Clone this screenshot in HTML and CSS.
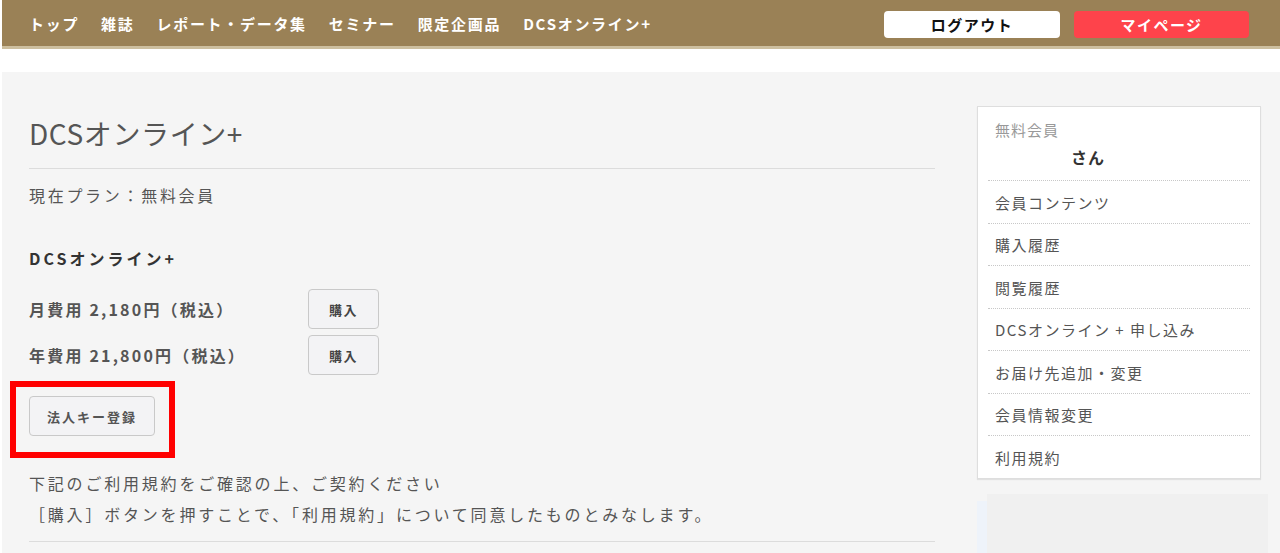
FILE: index.html
```html
<!DOCTYPE html>
<html lang="ja">
<head>
<meta charset="utf-8">
<title>DCSオンライン+</title>
<link rel="stylesheet" href="styles.css">
</head>
<body>
<header class="site-header">
  <nav class="gnav">
    <a class="gnav-item" href="#">トップ</a>
    <a class="gnav-item" href="#">雑誌</a>
    <a class="gnav-item" href="#">レポート・データ集</a>
    <a class="gnav-item" href="#">セミナー</a>
    <a class="gnav-item" href="#">限定企画品</a>
    <a class="gnav-item" href="#">DCSオンライン+</a>
  </nav>
  <div class="header-actions">
    <a class="hbtn hbtn-logout" href="#">ログアウト</a>
    <a class="hbtn hbtn-mypage" href="#">マイページ</a>
  </div>
</header>

<div class="page">
  <main class="main">
    <h1 class="page-title">DCSオンライン+</h1>
    <p class="current-plan">現在プラン：無料会員</p>
    <h2 class="plan-name">DCSオンライン+</h2>
    <div class="price-list">
      <div class="price-row">
        <span class="price-label">月費用 2,180円（税込）</span>
        <button class="btn btn-buy" type="button">購入</button>
      </div>
      <div class="price-row">
        <span class="price-label">年費用 21,800円（税込）</span>
        <button class="btn btn-buy" type="button">購入</button>
      </div>
    </div>
    <div class="corp-key">
      <button class="btn btn-corp" type="button">法人キー登録</button>
      <span class="highlight-box"></span>
    </div>
    <p class="terms-note">下記のご利用規約をご確認の上、ご契約ください<br>［購入］ボタンを押すことで、「利用規約」について同意したものとみなします。</p>
    <hr class="rule">
  </main>

  <aside class="side">
    <div class="member-box">
      <div class="member-head">
        <div class="member-plan">無料会員</div>
        <div class="member-name">さん</div>
      </div>
      <ul class="member-menu">
        <li class="member-item">会員コンテンツ</li>
        <li class="member-item">購入履歴</li>
        <li class="member-item">閲覧履歴</li>
        <li class="member-item">DCSオンライン + 申し込み</li>
        <li class="member-item">お届け先追加・変更</li>
        <li class="member-item">会員情報変更</li>
        <li class="member-item">利用規約</li>
      </ul>
    </div>
    <div class="side-banner">
      <span class="banner-edge"></span>
      <span class="banner-body"></span>
    </div>
  </aside>
</div>
</body>
</html>
```

FILE: styles.css
```css
* { box-sizing: border-box; }

html, body {
  margin: 0;
  padding: 0;
  background: #ffffff;
  height: 553px;
  overflow: hidden;
}

body {
  padding-left: 2px;
  font-family: "Noto Sans CJK JP", "Noto Sans", sans-serif;
  color: #555;
}

/* ---------- header ---------- */
.site-header {
  height: 49px;
  background: #9a8156;
  border-bottom: 3px solid #cdbf9f;
  display: flex;
  align-items: center;
  justify-content: space-between;
  padding: 2px 31px 0 27px;
}

.gnav {
  display: flex;
  gap: 22px;
}

.gnav-item {
  color: #ffffff;
  text-decoration: none;
  font-weight: 700;
  font-size: 15px;
  letter-spacing: 1.7px;
  line-height: 20px;
}

.header-actions {
  display: flex;
  gap: 14px;
}

.hbtn {
  display: flex;
  align-items: center;
  justify-content: center;
  width: 176px;
  height: 27px;
  border-radius: 4px;
  font-size: 15px;
  font-weight: 700;
  letter-spacing: 1.5px;
  text-decoration: none;
}

.hbtn-logout {
  background: #ffffff;
  color: #111;
}

.hbtn-mypage {
  width: 175px;
  background: #fe434b;
  color: #ffffff;
}

/* ---------- page ---------- */
.page {
  margin-top: 23px;
  background: #f5f5f5;
  height: 481px;
  display: flex;
  gap: 42px;
  padding: 34px 19px 0 27px;
}

.main {
  width: 906px;
  flex: none;
}

.page-title {
  margin: 7px 0 0;
  font-size: 28px;
  line-height: 40px;
  font-weight: 400;
  letter-spacing: 0.6px;
  color: #555;
  padding-bottom: 15px;
  border-bottom: 1px solid #dcdcdc;
}

.current-plan {
  margin: 13px 0 0;
  font-size: 16px;
  line-height: 26px;
  letter-spacing: 2.7px;
  color: #555;
}

.plan-name {
  margin: 37px 0 0;
  font-size: 16px;
  line-height: 26px;
  font-weight: 700;
  letter-spacing: 3px;
  color: #333;
}

.price-list {
  margin-top: 18px;
  display: flex;
  flex-direction: column;
  gap: 6px;
}

.price-row {
  display: grid;
  grid-template-columns: 279px 71px;
  align-items: center;
}

.price-label {
  font-size: 16px;
  font-weight: 700;
  letter-spacing: 2.2px;
  color: #555;
}

.btn {
  font-family: "Noto Sans CJK JP", "Noto Sans", sans-serif;
  background: #f3f3f5;
  border: 1px solid #c9c9c9;
  border-radius: 4px;
  color: #444;
  font-weight: 700;
  font-size: 13px;
  letter-spacing: 1.5px;
  height: 40px;
  padding: 0;
  cursor: pointer;
}

.btn-buy {
  width: 71px;
}

.corp-key {
  position: relative;
  margin-top: 21px;
  width: 126px;
  height: 40px;
}

.btn-corp {
  width: 126px;
  color: #555;
  letter-spacing: 2px;
}

.highlight-box {
  position: absolute;
  left: -19px;
  top: -15px;
  width: 165px;
  height: 77px;
  border: 6px solid #ff0000;
  pointer-events: none;
}

.terms-note {
  margin: 32px 0 0;
  font-size: 16px;
  line-height: 31px;
  letter-spacing: 2.8px;
  color: #555;
}

.rule {
  margin: 11px 0 0;
  border: 0;
  border-top: 1px solid #dcdcdc;
}

/* ---------- sidebar ---------- */
.side {
  width: 284px;
  flex: none;
}

.member-box {
  background: #ffffff;
  border: 1px solid #dedede;
  box-shadow: 0 1px 1px rgba(0, 0, 0, 0.08);
  padding: 0 10px;
}

.member-head {
  padding: 12px 7px 11px;
  border-bottom: 1px dotted #c8c8c8;
}

.member-plan {
  font-size: 15px;
  line-height: 22px;
  color: #999;
  letter-spacing: 1px;
}

.member-name {
  margin-top: 4px;
  padding-left: 76px;
  font-size: 16px;
  line-height: 24px;
  font-weight: 700;
  color: #333;
  letter-spacing: 1px;
}

.member-menu {
  list-style: none;
  margin: 0;
  padding: 0;
}

.member-item {
  padding: 10.5px 7px 10px;
  line-height: 21px;
  font-size: 15px;
  letter-spacing: 1.5px;
  color: #555;
  border-bottom: 1px dotted #c8c8c8;
}

.member-item:last-child {
  border-bottom: 0;
}

.side-banner {
  display: flex;
  margin-top: 15px;
  margin-right: -7px;
  height: 80px;
}

.banner-edge {
  width: 10px;
  margin-top: 7px;
  background: #eef3fa;
}

.banner-body {
  flex: 1;
  background: #f0f0f0;
}
```
